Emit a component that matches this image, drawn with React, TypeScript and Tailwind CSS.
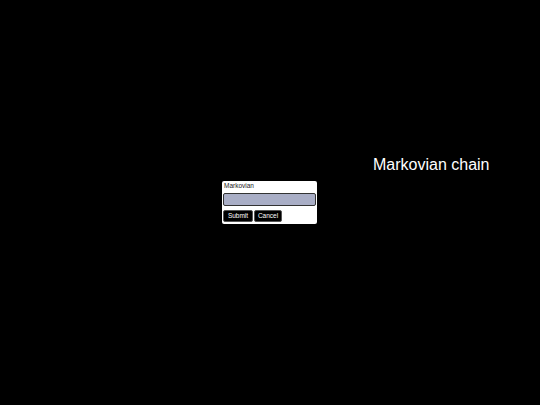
export default function App() {
  return (
    <div
      className="flex items-start w-[540px] h-[405px] bg-black overflow-hidden"
      style={{ fontFamily: '"Liberation Sans", Arial, sans-serif' }}
    >
      <div className="ml-[222px] mt-[181px] w-[95px] h-[43px] bg-white rounded-[2px] flex flex-col pl-[1px] pt-[1px]">
        <div className="text-[6.5px] leading-[8px] text-[#222] pl-[1px]">Markovian</div>
        <input
          className="mt-[3px] w-[93px] h-[13px] bg-[#a9aec6] border border-[#333] rounded-[2px] outline-none"
          type="text"
        />
        <div className="flex gap-[1px] mt-[4px]">
          <button className="w-[30px] h-[12px] bg-black text-white text-[6.5px] leading-none rounded-[2px] border border-[#555]">
            Submit
          </button>
          <button className="w-[28px] h-[12px] bg-black text-white text-[6.5px] leading-none rounded-[2px] border border-[#555]">
            Cancel
          </button>
        </div>
      </div>
      <div className="ml-[56px] mt-[155px] text-white text-[16px] leading-[20px]">Markovian chain</div>
    </div>
  );
}
